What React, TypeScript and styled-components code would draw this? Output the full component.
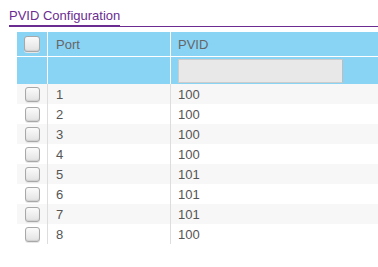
import React from 'react'
import styled, { createGlobalStyle } from 'styled-components'

const GlobalStyle = createGlobalStyle`
    html, body {
        margin: 0;
        padding: 0;
        background: #ffffff;
    }
    body {
        font-family: 'Liberation Sans', Arial, sans-serif;
        font-size: 13px;
        color: #555555;
    }
`

const Page = styled.div`
    width: 378px;
    height: 267px;
    overflow: hidden;
`

const TitleBar = styled.div`
    margin-left: 9px;
    padding-top: 8px;
    border-bottom: 1px solid #6b2c91;
`

const Title = styled.span`
    display: inline-block;
    line-height: 16px;
    padding-bottom: 1px;
    margin-bottom: -1px;
    color: #6b2c91;
    border-bottom: 2px solid #6b2c91;
`

const Table = styled.div`
    margin: 5px 0 0 17px;
`

const Row = styled.div<{ $head?: boolean, $divider?: boolean, $height: number, $striped?: boolean }>`
    display: grid;
    grid-template-columns: 31px 123px 1fr;
    height: ${ p => p.$height }px;
    background: ${ p => p.$head ? '#89d3f5' : p.$striped ? '#f7f7f7' : '#ffffff' };
    border-bottom: ${ p => p.$divider ? '1px solid #ffffff' : 'none' };
    color: ${ p => p.$head ? '#666666' : '#555555' };
`

const Cell = styled.div<{ $head?: boolean, $last?: boolean }>`
    display: flex;
    align-items: center;
    padding-left: ${ p => p.$last ? 7 : 8 }px;
    border-right: ${ p => p.$last ? 'none' : p.$head ? '1px solid #ffffff' : '1px solid #dddddd' };
`

const BoxCell = styled.div<{ $head?: boolean }>`
    display: flex;
    align-items: center;
    justify-content: center;
    border-right: 1px solid ${ p => p.$head ? '#ffffff' : '#dddddd' };
`

const Check = styled.span<{ $size: number }>`
    box-sizing: border-box;
    width: ${ p => p.$size }px;
    height: ${ p => p.$size }px;
    border: 1px solid #a8a8a8;
    border-radius: 3px;
    background: linear-gradient(#fbfbfb, #e2e2e2);
    box-shadow: inset 0 -1px 1px #d0d0d0, 0 1px 0 #e6e6e6;
`

const FilterCell = styled.div`
    padding: 2px 0 0 7px;
`

const FilterInput = styled.div`
    box-sizing: border-box;
    width: 165px;
    height: 24px;
    background: #e8e8e8;
    border: 1px solid #cccccc;
    border-right-color: #bdbdbd;
`

const ports = [
    { port: 1, pvid: 100 },
    { port: 2, pvid: 100 },
    { port: 3, pvid: 100 },
    { port: 4, pvid: 100 },
    { port: 5, pvid: 101 },
    { port: 6, pvid: 101 },
    { port: 7, pvid: 101 },
    { port: 8, pvid: 100 }
]

export default function App() {
    return (
        <Page>
            <GlobalStyle />
            <TitleBar>
                <Title>PVID Configuration</Title>
            </TitleBar>
            <Table>
                <Row $head $divider $height={ 24 }>
                    <BoxCell $head><Check $size={ 16 } /></BoxCell>
                    <Cell $head>Port</Cell>
                    <Cell $head $last>PVID</Cell>
                </Row>
                <Row $head $height={ 27 }>
                    <BoxCell $head />
                    <Cell $head />
                    <FilterCell><FilterInput /></FilterCell>
                </Row>
                { ports.map((p, i) => (
                    <Row key={ p.port } $height={ 20 } $striped={ i % 2 === 0 }>
                        <BoxCell><Check $size={ 15 } /></BoxCell>
                        <Cell>{ p.port }</Cell>
                        <Cell $last>{ p.pvid }</Cell>
                    </Row>
                )) }
            </Table>
        </Page>
    )
}
